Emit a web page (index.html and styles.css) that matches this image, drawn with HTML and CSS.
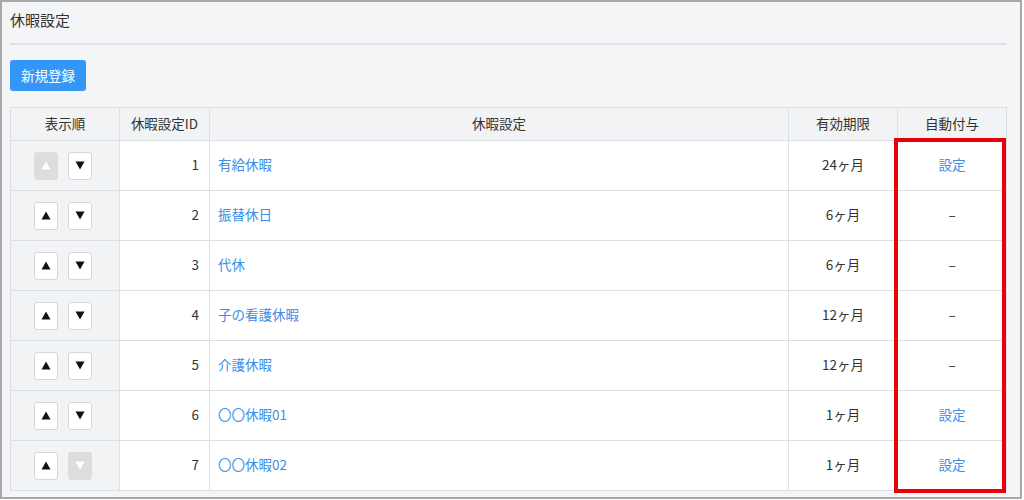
FILE: index.html
```html
<!DOCTYPE html>
<html lang="ja">
<head>
<meta charset="utf-8">
<title>休暇設定</title>
<link rel="stylesheet" href="styles.css">
</head>
<body>
<div class="frame">
  <h1 class="title">休暇設定</h1>
  <hr class="rule">
  <button class="btn-primary" type="button">新規登録</button>
  <table class="grid">
    <colgroup>
      <col class="c-order"><col class="c-id"><col class="c-name"><col class="c-term"><col class="c-auto">
    </colgroup>
    <thead>
      <tr><th>表示順</th><th>休暇設定ID</th><th>休暇設定</th><th>有効期限</th><th>自動付与</th></tr>
    </thead>
    <tbody>
      <tr>
        <td class="order"><span class="arrow disabled"><svg viewBox="0 0 10 9" width="10" height="9"><polygon points="5,0.5 9.5,8.5 0.5,8.5"/></svg></span><span class="arrow"><svg viewBox="0 0 10 9" width="10" height="9"><polygon points="0.5,0.5 9.5,0.5 5,8.5"/></svg></span></td>
        <td class="num">1</td><td class="name"><a href="#">有給休暇</a></td><td class="center">24ヶ月</td><td class="center"><a href="#">設定</a></td>
      </tr>
      <tr>
        <td class="order"><span class="arrow"><svg viewBox="0 0 10 9" width="10" height="9"><polygon points="5,0.5 9.5,8.5 0.5,8.5"/></svg></span><span class="arrow"><svg viewBox="0 0 10 9" width="10" height="9"><polygon points="0.5,0.5 9.5,0.5 5,8.5"/></svg></span></td>
        <td class="num">2</td><td class="name"><a href="#">振替休日</a></td><td class="center">6ヶ月</td><td class="center">–</td>
      </tr>
      <tr>
        <td class="order"><span class="arrow"><svg viewBox="0 0 10 9" width="10" height="9"><polygon points="5,0.5 9.5,8.5 0.5,8.5"/></svg></span><span class="arrow"><svg viewBox="0 0 10 9" width="10" height="9"><polygon points="0.5,0.5 9.5,0.5 5,8.5"/></svg></span></td>
        <td class="num">3</td><td class="name"><a href="#">代休</a></td><td class="center">6ヶ月</td><td class="center">–</td>
      </tr>
      <tr>
        <td class="order"><span class="arrow"><svg viewBox="0 0 10 9" width="10" height="9"><polygon points="5,0.5 9.5,8.5 0.5,8.5"/></svg></span><span class="arrow"><svg viewBox="0 0 10 9" width="10" height="9"><polygon points="0.5,0.5 9.5,0.5 5,8.5"/></svg></span></td>
        <td class="num">4</td><td class="name"><a href="#">子の看護休暇</a></td><td class="center">12ヶ月</td><td class="center">–</td>
      </tr>
      <tr>
        <td class="order"><span class="arrow"><svg viewBox="0 0 10 9" width="10" height="9"><polygon points="5,0.5 9.5,8.5 0.5,8.5"/></svg></span><span class="arrow"><svg viewBox="0 0 10 9" width="10" height="9"><polygon points="0.5,0.5 9.5,0.5 5,8.5"/></svg></span></td>
        <td class="num">5</td><td class="name"><a href="#">介護休暇</a></td><td class="center">12ヶ月</td><td class="center">–</td>
      </tr>
      <tr>
        <td class="order"><span class="arrow"><svg viewBox="0 0 10 9" width="10" height="9"><polygon points="5,0.5 9.5,8.5 0.5,8.5"/></svg></span><span class="arrow"><svg viewBox="0 0 10 9" width="10" height="9"><polygon points="0.5,0.5 9.5,0.5 5,8.5"/></svg></span></td>
        <td class="num">6</td><td class="name"><a href="#">〇〇休暇01</a></td><td class="center">1ヶ月</td><td class="center"><a href="#">設定</a></td>
      </tr>
      <tr>
        <td class="order"><span class="arrow"><svg viewBox="0 0 10 9" width="10" height="9"><polygon points="5,0.5 9.5,8.5 0.5,8.5"/></svg></span><span class="arrow disabled"><svg viewBox="0 0 10 9" width="10" height="9"><polygon points="0.5,0.5 9.5,0.5 5,8.5"/></svg></span></td>
        <td class="num">7</td><td class="name"><a href="#">〇〇休暇02</a></td><td class="center">1ヶ月</td><td class="center"><a href="#">設定</a></td>
      </tr>
    </tbody>
  </table>
  <div class="highlight"></div>
</div>
</body>
</html>
```
FILE: styles.css
```css
html, body {
  margin: 0;
  padding: 0;
  background: #ffffff;
}
body {
  font-family: "Noto Sans CJK JP", "Noto Sans", sans-serif;
  color: #333333;
  font-size: 13.5px;
}
.frame {
  position: relative;
  box-sizing: border-box;
  width: 1022px;
  height: 499px;
  border: 2px solid #a8a8a8;
  background: #f4f5f7;
  padding: 8px 13px 0 8px;
}
.title {
  margin: 0;
  font-size: 15px;
  font-weight: normal;
  line-height: 20px;
  color: #333333;
}
.rule {
  margin: 13px 0 0 0;
  border: 0;
  height: 2px;
  width: 997px;
  background: #dfe1e5;
}
.btn-primary {
  display: block;
  margin-top: 15px;
  width: 76px;
  height: 31px;
  padding: 0 0 2px 0;
  border: 0;
  border-radius: 3px;
  background: #3496f7;
  color: #ffffff;
  font-family: inherit;
  font-size: 13.5px;
}
.grid {
  margin-top: 16px;
  width: 997px;
  border-collapse: collapse;
  table-layout: fixed;
  background: #ffffff;
}
.c-order { width: 109px; }
.c-id { width: 90px; }
.c-name { width: 579px; }
.c-term { width: 109px; }
.c-auto { width: 109px; }
.grid thead tr { height: 33px; }
.grid tbody tr { height: 50px; }
.grid th, .grid td {
  border: 1px solid #dcdfe4;
  padding: 0 10px 3px 10px;
  font-size: 13.5px;
  line-height: 18px;
  vertical-align: middle;
}
.grid th {
  background: #f2f3f5;
  font-weight: normal;
  text-align: center;
  color: #333333;
}
.grid td.order {
  background: #f2f3f5;
  text-align: center;
  padding: 0 4px 0 0;
}
.grid td.num { text-align: right; }
.grid td.name { padding-left: 8px; }
.grid td.center { text-align: center; }
.grid a {
  color: #3a8ee8;
  text-decoration: none;
}
.order {
  font-size: 0;
}
.arrow {
  display: inline-flex;
  align-items: center;
  justify-content: center;
  box-sizing: border-box;
  width: 24px;
  height: 28px;
  margin: 0 5px;
  background: #ffffff;
  border: 1px solid #d4d6da;
  border-radius: 3px;
  vertical-align: middle;
}
.arrow svg { fill: #111111; }
.arrow.disabled {
  background: #dddddd;
  border-color: #dddddd;
}
.arrow.disabled svg { fill: #ffffff; }
.highlight {
  position: absolute;
  left: 892px;
  top: 136px;
  width: 112px;
  height: 355px;
  box-sizing: border-box;
  border: 4px solid #e8000b;
}
```
